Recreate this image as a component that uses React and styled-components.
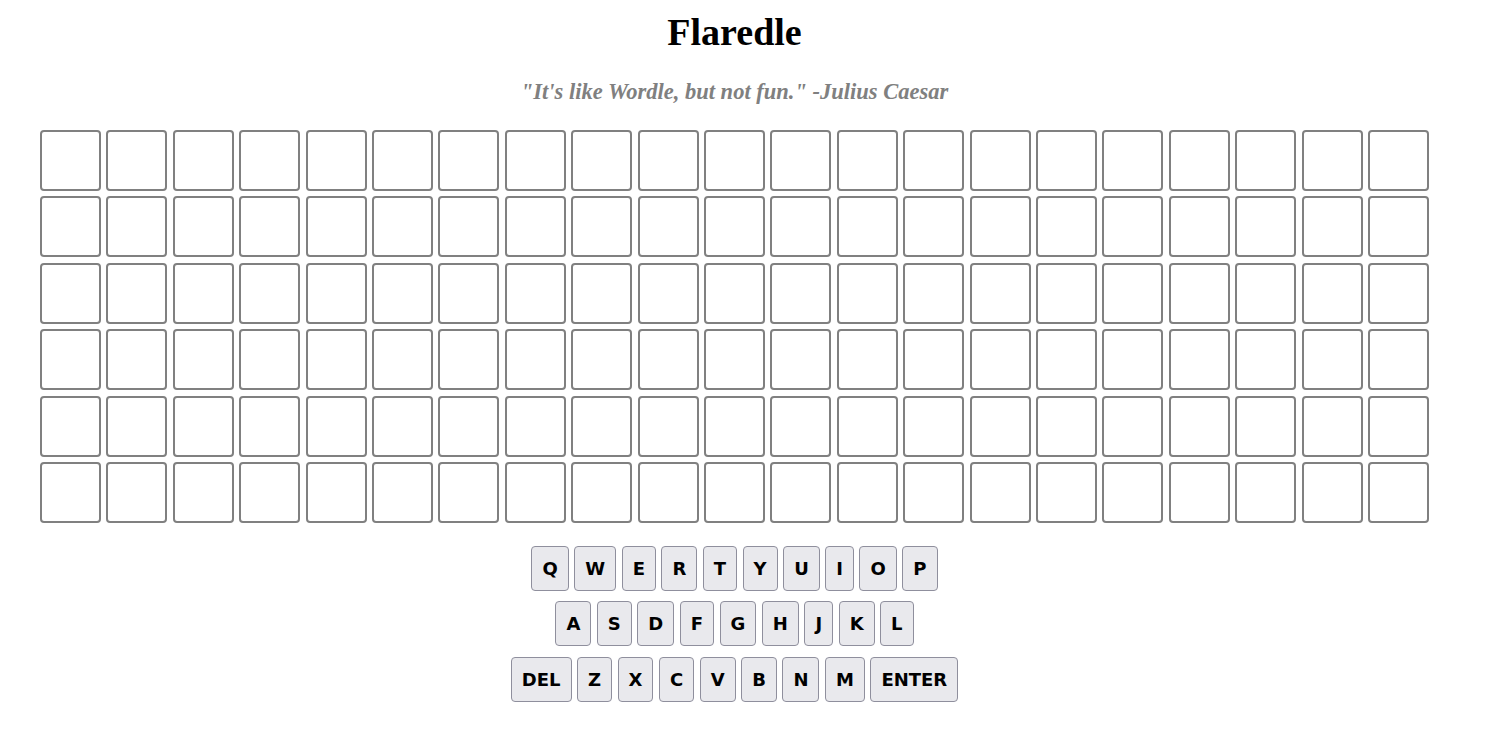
import React from "react";
import styled, { createGlobalStyle } from "styled-components";

const GlobalStyle = createGlobalStyle`
  body {
    margin: 0;
    background: #ffffff;
  }
`;

const Page = styled.div`
  width: 1469px;
  display: flex;
  flex-direction: column;
  align-items: center;
  padding-top: 10px;
`;

const Title = styled.h1`
  margin: 0;
  font-family: "Liberation Serif", serif;
  font-size: 38px;
  font-weight: bold;
  color: #000;
  line-height: 44px;
`;

const Quote = styled.h3`
  margin: 25px 0 0;
  font-family: "Liberation Serif", serif;
  font-size: 22.5px;
  font-style: italic;
  font-weight: bold;
  color: #808080;
  line-height: 26px;
`;

const Board = styled.div`
  margin-top: 25px;
  display: grid;
  grid-template-columns: repeat(21, 61px);
  grid-auto-rows: 61px;
  column-gap: 5.4px;
  row-gap: 5.4px;
`;

const Tile = styled.div`
  box-sizing: border-box;
  border: 2px solid #808080;
  border-radius: 4px;
  background: #fff;
`;

const Keyboard = styled.div`
  margin-top: 23px;
  display: flex;
  flex-direction: column;
  align-items: center;
  gap: 10.5px;
`;

const KeyRow = styled.div`
  display: flex;
  gap: 5.5px;
`;

const Key = styled.button`
  box-sizing: border-box;
  height: 45px;
  padding: 0 10px;
  font-family: "DejaVu Sans", Verdana, sans-serif;
  font-size: 18px;
  font-weight: bold;
  color: #000;
  background: #e9e9ed;
  border: 1px solid #8f8f9d;
  border-radius: 4px;
`;

const rows = [
  ["Q", "W", "E", "R", "T", "Y", "U", "I", "O", "P"],
  ["A", "S", "D", "F", "G", "H", "J", "K", "L"],
  ["DEL", "Z", "X", "C", "V", "B", "N", "M", "ENTER"],
];

export default function App() {
  return (
    <Page>
      <GlobalStyle />
      <Title>Flaredle</Title>
      <Quote>"It's like Wordle, but not fun." -Julius Caesar</Quote>
      <Board>
        {Array.from({ length: 6 * 21 }).map((_, i) => (
          <Tile key={i} />
        ))}
      </Board>
      <Keyboard>
        {rows.map((row, r) => (
          <KeyRow key={r}>
            {row.map((k) => (
              <Key key={k}>{k}</Key>
            ))}
          </KeyRow>
        ))}
      </Keyboard>
    </Page>
  );
}
